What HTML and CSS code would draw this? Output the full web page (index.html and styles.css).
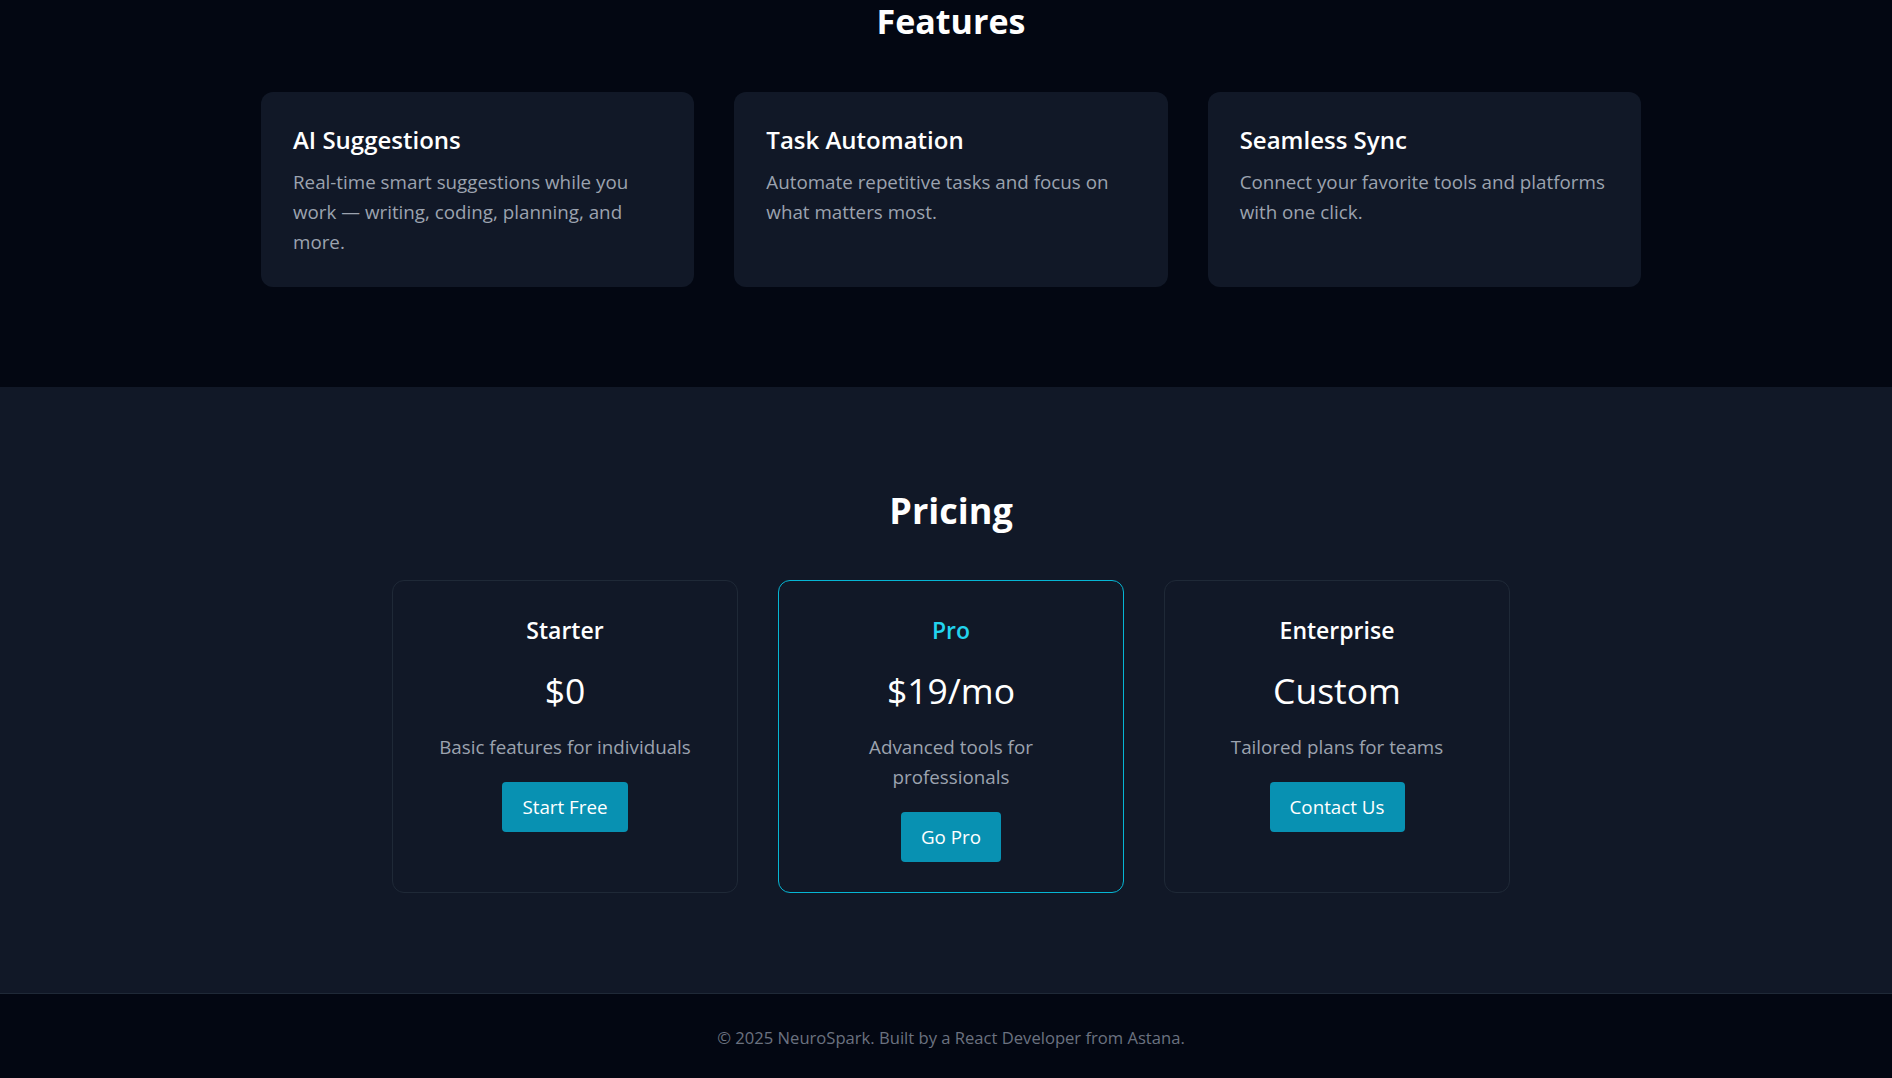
FILE: index.html
```html
<!DOCTYPE html>
<html lang="en">
<head>
<meta charset="utf-8">
<title>NeuroSpark</title>
<link rel="stylesheet" href="styles.css">
</head>
<body>
  <section class="features">
    <h2 class="section-title features-title">Features</h2>
    <div class="feature-grid">
      <div class="feature-card">
        <h3 class="feature-name">AI Suggestions</h3>
        <p class="feature-text">Real-time smart suggestions while you work — writing, coding, planning, and more.</p>
      </div>
      <div class="feature-card">
        <h3 class="feature-name">Task Automation</h3>
        <p class="feature-text">Automate repetitive tasks and focus on what matters most.</p>
      </div>
      <div class="feature-card">
        <h3 class="feature-name">Seamless Sync</h3>
        <p class="feature-text">Connect your favorite tools and platforms with one click.</p>
      </div>
    </div>
  </section>

  <section class="pricing">
    <h2 class="section-title pricing-title">Pricing</h2>
    <div class="plan-grid">
      <div class="plan">
        <h3 class="plan-name">Starter</h3>
        <div class="plan-price">$0</div>
        <p class="plan-text">Basic features for individuals</p>
        <a class="plan-btn">Start Free</a>
      </div>
      <div class="plan plan-featured">
        <h3 class="plan-name plan-name-featured">Pro</h3>
        <div class="plan-price">$19/mo</div>
        <p class="plan-text">Advanced tools for professionals</p>
        <a class="plan-btn">Go Pro</a>
      </div>
      <div class="plan">
        <h3 class="plan-name">Enterprise</h3>
        <div class="plan-price">Custom</div>
        <p class="plan-text">Tailored plans for teams</p>
        <a class="plan-btn">Contact Us</a>
      </div>
    </div>
  </section>

  <footer class="footer">
    <p class="footer-text">© 2025 NeuroSpark. Built by a React Developer from Astana.</p>
  </footer>
</body>
</html>
```
FILE: styles.css
```css
* { box-sizing: border-box; }

html, body {
  margin: 0;
  padding: 0;
}

body {
  background: #030712;
  color: #ffffff;
  font-family: "Open Sans", "Noto Sans", sans-serif;
  overflow: hidden;
}

.section-title {
  margin: 0;
  text-align: center;
  line-height: 40px;
  font-weight: 700;
  color: #ffffff;
}

.features {
  padding: 0 0 100px 10px;
}

.features-title {
  font-size: 34px;
  margin-top: 1px;
  margin-bottom: 51px;
}

.feature-grid {
  width: 1380px;
  margin: 0 auto;
  display: grid;
  grid-template-columns: repeat(3, 1fr);
  gap: 40px;
}

.feature-card {
  background: #111827;
  border-radius: 12px;
  padding: 32px 32px 30px;
}

.feature-name {
  margin: 0 0 11px;
  font-size: 24px;
  line-height: 32px;
  font-weight: 600;
  color: #ffffff;
}

.feature-text {
  margin: 0;
  font-size: 18.8px;
  line-height: 30px;
  color: #9ca3af;
}

.pricing {
  background: #111827;
  padding: 104px 0 100px 10px;
}

.pricing-title {
  font-size: 36px;
  margin-bottom: 49px;
}

.plan-grid {
  display: flex;
  justify-content: center;
  gap: 40px;
}

.plan {
  width: 346px;
  border: 1px solid #1f2937;
  border-radius: 12px;
  padding: 33px 32px 30px;
  text-align: center;
}

.plan-featured {
  border-color: #06b6d4;
}

.plan-name {
  margin: 0 0 24px;
  font-size: 23px;
  line-height: 32px;
  font-weight: 600;
  color: #ffffff;
}

.plan-name-featured {
  color: #22d3ee;
}

.plan-price {
  font-size: 35.5px;
  line-height: 40px;
  font-weight: 400;
  color: #ffffff;
  margin-bottom: 22px;
}

.plan-text {
  margin: 0 0 20px;
  font-size: 18.8px;
  line-height: 30px;
  color: #9ca3af;
}

.plan-btn {
  display: inline-block;
  background: #0891b2;
  color: #ffffff;
  font-size: 18.8px;
  line-height: 28px;
  padding: 11px 20px;
  border-radius: 4px;
}

.footer {
  border-top: 1px solid #1f2937;
  padding: 32px 0 27px 10px;
  text-align: center;
}

.footer-text {
  margin: 0;
  font-size: 16.6px;
  line-height: 24px;
  color: #6b7280;
}
```
